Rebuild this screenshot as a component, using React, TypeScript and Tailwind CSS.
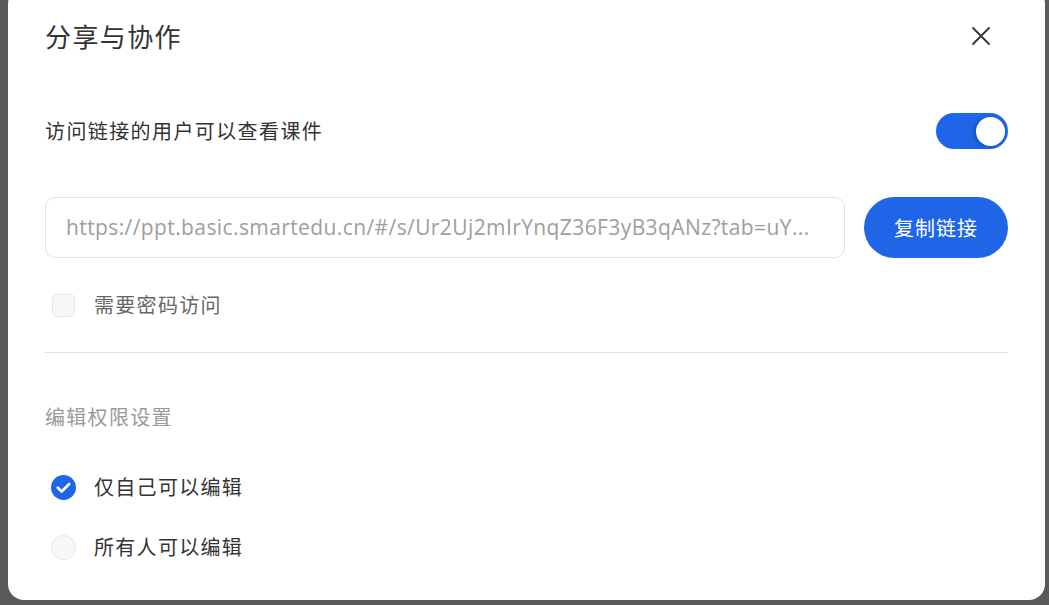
import React, { useState } from 'react';

const font = { fontFamily: '"Noto Sans CJK SC", "Noto Sans", sans-serif' };

export default function App() {
  const [shareOn, setShareOn] = useState(true);
  const [needPwd, setNeedPwd] = useState(false);
  const [perm, setPerm] = useState<'self' | 'all'>('self');

  const link = 'https://ppt.basic.smartedu.cn/#/s/Ur2Uj2mIrYnqZ36F3yB3qANz?tab=uY...';

  return (
    <div className="h-[605px] w-full overflow-hidden bg-[#5a5a5a] pl-[8px] pr-[4px]" style={font}>
      <div className="mt-[-12px] bg-white rounded-[16px] pt-[30px] pb-[38px] px-[37px]">
        {/* header */}
        <div className="flex items-center justify-between h-[36px]">
          <h2 className="text-[26px] text-[#333] leading-none tracking-[1.4px]">分享与协作</h2>
          <button className="w-[20px] h-[20px] mr-[17px] flex items-center justify-center text-[#333]">
            <svg width="20" height="20" viewBox="0 0 20 20" fill="none" stroke="currentColor" strokeWidth="1.8" strokeLinecap="round">
              <path d="M2 2 L18 18 M18 2 L2 18" />
            </svg>
          </button>
        </div>

        {/* share toggle */}
        <div className="mt-[59px] h-[36px] flex items-center justify-between">
          <span className="text-[20px] text-[#333] tracking-[1.4px]">访问链接的用户可以查看课件</span>
          <button
            onClick={() => setShareOn(!shareOn)}
            className={`w-[72px] h-[36px] rounded-full flex items-center px-[3px] ${shareOn ? 'bg-[#1f65e8] justify-end' : 'bg-[#d9d9d9] justify-start'}`}
          >
            <span className="w-[29px] h-[29px] rounded-full bg-white shadow-[-2px_1px_4px_rgba(0,0,0,0.2)]"></span>
          </button>
        </div>

        {/* link row */}
        <div className="mt-[48px] h-[61px] flex items-center gap-[19px]">
          <div className="flex-1 h-full border border-[#e3e3e3] rounded-[10px] flex items-center pl-[20px] pr-[20px] min-w-0 overflow-hidden">
            <span className="text-[21px] text-[#9e9e9e] whitespace-nowrap tracking-[0.4px]" style={{ fontFamily: '"Open Sans", "Noto Sans CJK SC", sans-serif' }}>{link}</span>
          </div>
          <button className="w-[144px] h-full rounded-full bg-[#1f65e8] text-white text-[20px] tracking-[1px]">复制链接</button>
        </div>

        {/* password */}
        <div className="mt-[32px] h-[30px] flex items-center">
          <button
            onClick={() => setNeedPwd(!needPwd)}
            className="ml-[7px] w-[23px] h-[23px] rounded-[5px] border border-[#e6e6e6] bg-[#f7f7f7]"
          ></button>
          <span className="ml-[19px] text-[20px] text-[#666] tracking-[1.3px]">需要密码访问</span>
        </div>

        <div className="mt-[32px] h-px bg-[#e0e0e0]"></div>

        <div className="mt-[49px] h-[30px] flex items-center">
          <span className="text-[20px] text-[#9a9a9a] tracking-[1.3px]">编辑权限设置</span>
        </div>

        {([
          { key: 'self', label: '仅自己可以编辑', mt: 'mt-[40px]' },
          { key: 'all', label: '所有人可以编辑', mt: 'mt-[30px]' },
        ] as const).map(o => (
          <div key={o.key} className={`${o.mt} h-[30px] flex items-center cursor-pointer`} onClick={() => setPerm(o.key)}>
            {perm === o.key ? (
              <svg className="ml-[6px]" width="25" height="25" viewBox="0 0 24 24">
                <circle cx="12" cy="12" r="12" fill="#1f65e8" />
                <path d="M6.5 12.2 L10.2 15.8 L17.5 8.6" fill="none" stroke="#fff" strokeWidth="2.6" strokeLinecap="round" strokeLinejoin="round" />
              </svg>
            ) : (
              <span className="ml-[6px] w-[25px] h-[25px] rounded-full border border-[#e6e6e6] bg-[#f7f7f7]"></span>
            )}
            <span className="ml-[18px] text-[20px] text-[#333] tracking-[1.3px]">{o.label}</span>
          </div>
        ))}
      </div>
    </div>
  );
}
